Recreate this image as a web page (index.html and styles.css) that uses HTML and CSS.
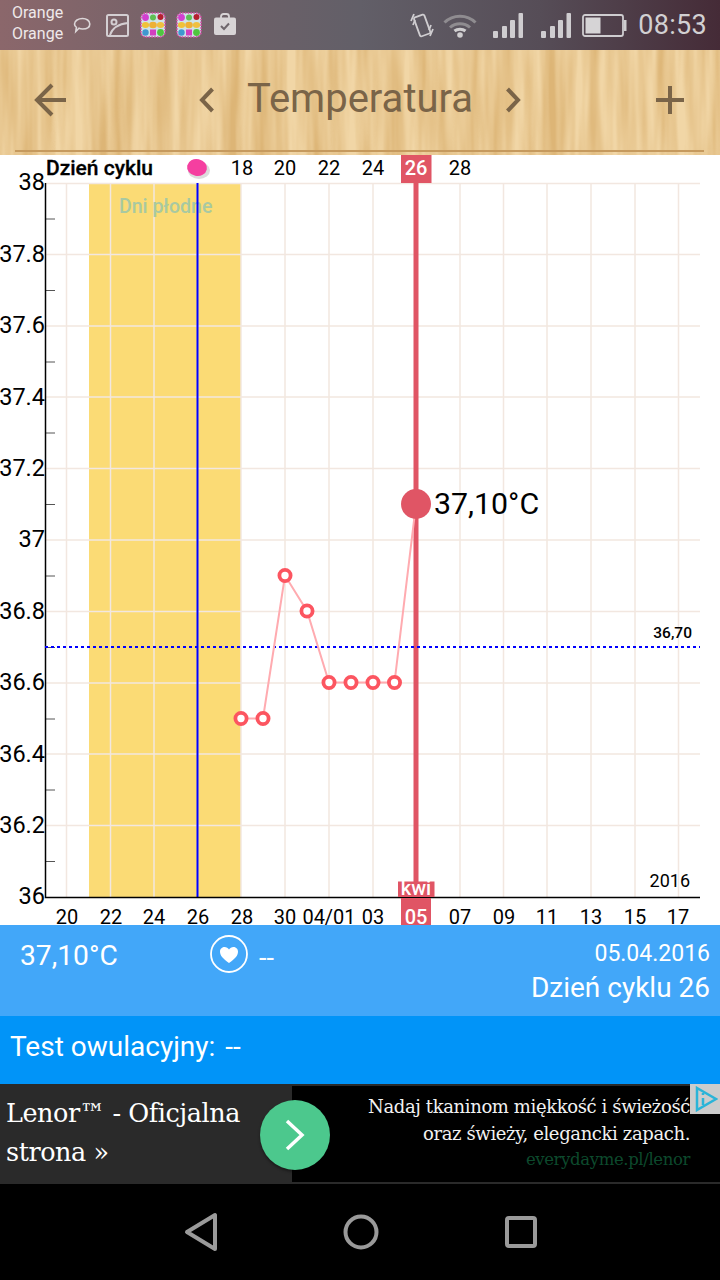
FILE: index.html
```html
<!DOCTYPE html>
<html lang="pl">
<head>
    <meta charset="UTF-8">
    <title>Temperatura</title>
    <meta name="viewport" content="width=device-width, initial-scale=1.0">
    <link rel="stylesheet" href="styles.css">
</head>
<body>
    <svg class="defs" width="0" height="0">
        <symbol id="candy" viewBox="0 0 26 26">
            <rect x="1" y="1" width="24" height="24" rx="5" fill="#cfe3e8" stroke="#d84fa8" stroke-width="1.6" stroke-dasharray="1.6 1.2"/>
            <circle cx="5.5" cy="5.5" r="3.4" fill="#d23fd0"/>
            <circle cx="13" cy="5.5" r="3" fill="#5fbf55"/>
            <circle cx="20.5" cy="5" r="3" fill="#b5202f"/>
            <ellipse cx="5.5" cy="13" rx="3.6" ry="3" fill="#f0c23a"/>
            <ellipse cx="13" cy="13" rx="3.8" ry="3.2" fill="#eeb035"/>
            <ellipse cx="20.5" cy="13" rx="3.6" ry="3" fill="#efc040"/>
            <circle cx="5.5" cy="20.5" r="3.2" fill="#3f98d0"/>
            <rect x="10" y="17.5" width="6" height="6" fill="#d23fc0"/>
            <circle cx="20.5" cy="20.5" r="3.4" fill="#4fc63f"/>
        </symbol>
        <symbol id="signal" viewBox="0 0 30 25">
            <rect x="0" y="18" width="5" height="7" rx="1"/>
            <rect x="9" y="13" width="5" height="12" rx="1"/>
            <rect x="17" y="7" width="5" height="18" rx="1"/>
            <rect x="25.500" y="0" width="4.500" height="25" rx="1"/>
        </symbol>
        <filter id="grain" x="0" y="0" width="100%" height="100%">
            <feTurbulence type="fractalNoise" baseFrequency="0.07 0.005" numOctaves="3" seed="7"/>
            <feColorMatrix values="0 0 0 0 0.72  0 0 0 0 0.46  0 0 0 0 0.18  2 0 0 0 -0.620"/>
        </filter>
    </svg>

    <div class="status-bar">
        <div class="carrier">Orange<br>Orange</div>
        <svg class="icon-bubble" width="18" height="17" viewBox="0 0 18 17">
            <path d="M9.500 1.500C13.500 1.500 16.800 3.700 16.800 7C16.800 10.300 13.500 12 9.500 12C8.300 12 7 11.800 6 11.300L2.800 14.500L3.400 10.300C2 9.300 1.500 8 1.500 7C1.500 3.700 5.500 1.500 9.500 1.500Z" fill="none" stroke="#dcd6d8" stroke-width="1.600"/>
        </svg>
        <svg class="icon-picture" width="23" height="23" viewBox="0 0 23 23" fill="none" stroke="#d4cfd2" stroke-width="2">
            <rect x="1" y="1" width="21" height="21" rx="1.500"/>
            <circle cx="8" cy="8" r="2.500"/>
            <path d="M4 21C6 15 12 10 22 9"/>
        </svg>
        <svg class="icon-candy" width="26" height="26"><use href="#candy"/></svg>
        <svg class="icon-candy second" width="26" height="26"><use href="#candy"/></svg>
        <svg class="icon-bag" width="22" height="22" viewBox="0 0 22 22">
            <path d="M7 5V3.500C7 2 8 1 9.500 1H12.500C14 1 15 2 15 3.500V5" fill="none" stroke="#d8d4d6" stroke-width="1.800"/>
            <rect x="0" y="4.500" width="22" height="17.500" rx="2" fill="#d8d4d6"/>
            <path d="M7 13L10 16L15 10.500" fill="none" stroke="#6f666c" stroke-width="2"/>
        </svg>
        <div class="status-right">
            <svg class="icon-vibrate" width="24" height="26" viewBox="0 0 24 26" fill="none" stroke="#cfcdd0" stroke-width="1.800">
                <rect x="6.500" y="3.500" width="11" height="20" rx="1.500" transform="rotate(-20 12 13)"/>
                <path d="M1 9L4 2M3 13L5 8M23 17L20 24M21 13L19 18"/>
            </svg>
            <svg class="icon-wifi" width="34" height="25" viewBox="0 0 34 25" fill="none">
                <path d="M1.500 9.500C10 1 24 1 32.500 9.500" stroke="#8f8c90" stroke-width="3"/>
                <path d="M7 14.500C12.500 9.500 21.500 9.500 27 14.500" stroke="#8f8c90" stroke-width="3"/>
                <path d="M11.500 18C14.500 15.500 19.500 15.500 22.500 18" stroke="#d0ced0" stroke-width="3"/>
                <circle cx="17" cy="22" r="2.800" fill="#d0ced0"/>
            </svg>
            <svg class="icon-signal" width="30" height="25" fill="#cfcdd0"><use href="#signal"/></svg>
            <svg class="icon-signal second" width="30" height="25" fill="#cfcdd0"><use href="#signal"/></svg>
            <svg class="icon-battery" width="45" height="23" viewBox="0 0 45 23">
                <rect x="1" y="1" width="40" height="21" rx="2" fill="none" stroke="#cfcdd0" stroke-width="1.800"/>
                <rect x="3.500" y="3.500" width="15" height="16" fill="#d6d4d6"/>
                <rect x="42" y="6" width="2.500" height="11" fill="#cfcdd0"/>
            </svg>
            <span class="clock">08:53</span>
        </div>
    </div>

    <header class="app-header">
        <svg class="wood" width="720" height="105"><rect width="720" height="105" filter="url(#grain)"/></svg>
        <svg class="icon-back" width="32" height="34" viewBox="0 0 32 34" fill="none" stroke="#7a6448" stroke-width="4">
            <path d="M32 17H3M18 2L3 17L18 32"/>
        </svg>
        <div class="title-group">
            <svg width="15" height="26" viewBox="0 0 15 26" fill="none" stroke="#7a6448" stroke-width="4"><path d="M13.500 2L3 13L13.500 24"/></svg>
            <h1>Temperatura</h1>
            <svg width="15" height="26" viewBox="0 0 15 26" fill="none" stroke="#7a6448" stroke-width="4"><path d="M1.500 2L12 13L1.500 24"/></svg>
        </div>
        <svg class="icon-plus" width="28" height="28" viewBox="0 0 28 28" fill="none" stroke="#7a6448" stroke-width="4">
            <path d="M0 14H28M14 0V28"/>
        </svg>
    </header>

    <svg class="chart" width="720" height="770" viewBox="0 155 720 770">
        <rect class="fertile" x="89" y="183" width="152" height="714"/>
        <path class="grid" d="M66.500 183V897M110.500 183V897M154 183V897M197.500 183V897M241 183V897M285 183V897M329 183V897M373 183V897M416 183V897M460 183V897M503.500 183V897M547 183V897M591 183V897M635 183V897M678.500 183V897"/>
        <path class="grid" d="M45 183.500H700M45 254.500H700M45 326H700M45 397H700M45 468.500H700M45 540H700M45 611.500H700M45 683H700M45 754H700M45 825.500H700"/>
        <path class="ticks" d="M46 219H55M46 290.500H55M46 362H55M46 433H55M46 504.500H55M46 576H55M46 647.500H55M46 719H55M46 790H55M46 861.500H55"/>
        <text class="fertile-label" x="119" y="213">Dni płodne</text>
        <path class="ovulation" d="M197.500 183V897"/>
        <path class="axis" d="M45.500 183V897.400H700"/>

        <g class="y-labels">
            <text x="45" y="190">38</text>
            <text x="45" y="262">37.8</text>
            <text x="45" y="333">37.6</text>
            <text x="45" y="405">37.4</text>
            <text x="45" y="476">37.2</text>
            <text x="45" y="547">37</text>
            <text x="45" y="619">36.8</text>
            <text x="45" y="690">36.6</text>
            <text x="45" y="762">36.4</text>
            <text x="45" y="833">36.2</text>
            <text x="45" y="904">36</text>
        </g>

        <text class="cycle-title" x="46" y="175">Dzień cyklu</text>
        <ellipse cx="199" cy="170.500" rx="11" ry="8.500" fill="#dcdcdc"/>
        <ellipse class="pink-dot" cx="197" cy="167.500" rx="10" ry="8.500" transform="rotate(12 197 167.500)"/>
        <g class="x-labels">
            <text x="242" y="175">18</text>
            <text x="285" y="175">20</text>
            <text x="329" y="175">22</text>
            <text x="373" y="175">24</text>
            <text x="460" y="175">28</text>
            <text x="67" y="924">20</text>
            <text x="111" y="924">22</text>
            <text x="154" y="924">24</text>
            <text x="198" y="924">26</text>
            <text x="242" y="924">28</text>
            <text x="285" y="924">30</text>
            <text x="329" y="924">04/01</text>
            <text x="373" y="924">03</text>
            <text x="460" y="924">07</text>
            <text x="504" y="924">09</text>
            <text x="547" y="924">11</text>
            <text x="591" y="924">13</text>
            <text x="635" y="924">15</text>
            <text x="678" y="924">17</text>
        </g>

        <path class="today-line" d="M416 183V897"/>
        <rect class="today" x="401" y="155" width="30.500" height="28"/>
        <rect class="today" x="398" y="881.500" width="36.500" height="15.500"/>
        <rect class="today" x="401" y="898" width="30" height="27"/>
        <text class="today-label" x="416" y="175">26</text>
        <text class="today-month" x="416" y="895">kwi</text>
        <text class="today-label" x="416" y="924">05</text>

        <path class="cover-line" d="M45 647H700"/>
        <text class="cover-value" x="692" y="638">36,70</text>
        <text class="year" x="690" y="887">2016</text>

        <polyline class="temp-line" points="241,718.500 263,718.500 285,575.500 307,611 329,682.500 351,682.500 373,682.500 394.500,682.500 416,504"/>
        <g class="temp-points">
            <circle cx="241" cy="718.500" r="5.600"/>
            <circle cx="263" cy="718.500" r="5.600"/>
            <circle cx="285" cy="575.500" r="5.600"/>
            <circle cx="307" cy="611" r="5.600"/>
            <circle cx="329" cy="682.500" r="5.600"/>
            <circle cx="351" cy="682.500" r="5.600"/>
            <circle cx="373" cy="682.500" r="5.600"/>
            <circle cx="394.500" cy="682.500" r="5.600"/>
        </g>
        <circle class="today" cx="416" cy="504" r="15"/>
        <text class="temp-value" x="434" y="514">37,10°C</text>
    </svg>

    <section class="info">
        <div class="info-temp">37,10°C</div>
        <div class="info-heart">
            <svg width="38" height="38" viewBox="0 0 38 38">
                <circle cx="19" cy="19" r="18" fill="none" stroke="#fff" stroke-width="1.800"/>
                <path d="M19 28C13 23.500 10 21 10 16.500C10 13.500 12.500 12 14.500 12C16.500 12 18 13 19 14.500C20 13 21.500 12 23.500 12C25.500 12 28 13.500 28 16.500C28 21 25 23.500 19 28Z" fill="#fff"/>
            </svg>
            <span>--</span>
        </div>
        <div class="info-date">
            <div class="date">05.04.2016</div>
            <div class="cycle-day">Dzień cyklu 26</div>
        </div>
    </section>

    <section class="ovulation-test">Test owulacyjny: <span>--</span></section>

    <section class="ad">
        <div class="ad-title">Lenor™ - Oficjalna strona »</div>
        <div class="ad-body">
            <p>Nadaj tkaninom miękkość i świeżość</p>
            <p>oraz świeży, elegancki zapach.</p>
            <p class="ad-url">everydayme.pl/lenor</p>
        </div>
        <div class="ad-go">
            <svg width="20" height="32" viewBox="0 0 20 32" fill="none" stroke="#fff" stroke-width="3.500"><path d="M2 2L17 16L2 30"/></svg>
        </div>
        <div class="ad-choices">
            <svg width="24" height="26" viewBox="0 0 24 26" fill="none" stroke="#2ab4d8" stroke-width="2.500">
                <path d="M3 2L22 13L3 24Z"/>
                <path d="M9 12V19M9 7V9"/>
            </svg>
        </div>
    </section>

    <nav class="nav-bar">
        <svg width="34" height="40" viewBox="0 0 34 40" fill="none" stroke="#9a9a9a" stroke-width="4" stroke-linejoin="round"><path d="M31 3V37L3 20Z"/></svg>
        <svg width="36" height="36" viewBox="0 0 36 36" fill="none" stroke="#9a9a9a" stroke-width="4"><circle cx="18" cy="18" r="15.500"/></svg>
        <svg width="32" height="32" viewBox="0 0 32 32" fill="none" stroke="#9a9a9a" stroke-width="4"><rect x="2" y="2" width="28" height="28" rx="2"/></svg>
    </nav>
</body>
</html>
```
FILE: styles.css
```css
* {
    box-sizing: border-box;
}

body {
    margin: 0;
    width: 720px;
    height: 1280px;
    overflow: hidden;
    background: #fff;
    font-family: Roboto, sans-serif;
}

.defs {
    position: absolute;
}

/* status bar */
.status-bar {
    height: 50px;
    display: flex;
    align-items: center;
    padding-left: 12px;
    background: linear-gradient(90deg, #8b676b 0%, #6f6168 30%, #625f68 50%, #564d57 75%, #452b37 100%);
}

.carrier {
    width: 61px;
    color: #efe9ea;
    font-size: 16px;
    line-height: 21px;
    margin-top: -4px;
}

.icon-picture {
    margin-left: 15px;
}

.icon-candy {
    margin-left: 11px;
}

.icon-candy.second {
    margin-left: 10px;
}

.icon-bag {
    margin-left: 12px;
    margin-top: -3px;
}

.status-right {
    margin-left: auto;
    display: flex;
    align-items: center;
    padding-right: 13px;
}

.icon-wifi {
    margin-left: 9px;
}

.icon-signal {
    margin-left: 16px;
}

.icon-signal.second {
    margin-left: 18px;
}

.icon-battery {
    margin-left: 11px;
}

.clock {
    margin-left: 11px;
    color: #d2d0d2;
    font-size: 27px;
    letter-spacing: 0.3px;
}

/* wood header */
.app-header {
    position: relative;
    height: 105px;
    display: flex;
    align-items: center;
    justify-content: space-between;
    padding: 0 36px 5px 34px;
    background: #f1d6a6;
}

.wood {
    position: absolute;
    left: 0;
    top: 0;
}

.app-header > svg:not(.wood),
.title-group {
    position: relative;
}

.app-header::after {
    content: "";
    position: absolute;
    left: 15px;
    top: 100px;
    width: 689px;
    height: 2px;
    background: #c69a5e;
}

.title-group {
    display: flex;
    align-items: center;
    gap: 33px;
    margin-left: -2px;
}

.app-header h1 {
    margin: -4px 0 0;
    color: #7a6448;
    font-size: 40px;
    font-weight: 400;
}

/* chart */
.chart {
    display: block;
    overflow: visible;
}

.fertile {
    fill: #fbdb75;
}

.grid {
    fill: none;
    stroke: #f2e7e0;
    stroke-width: 1.500;
}

.ticks {
    fill: none;
    stroke: #555;
    stroke-width: 1;
}

.axis {
    fill: none;
    stroke: #000;
    stroke-width: 1.500;
}

.ovulation {
    stroke: #0000ff;
    stroke-width: 2;
}

.fertile-label {
    fill: #a8c9a2;
    font-size: 19.500px;
    font-weight: 500;
}

.y-labels text {
    fill: #000;
    font-size: 23.500px;
    text-anchor: end;
}

.x-labels text {
    fill: #000;
    font-size: 20px;
    text-anchor: middle;
}

.cycle-title {
    fill: #000;
    stroke: #000;
    stroke-width: 0.300px;
    font-size: 21px;
    font-weight: 500;
}

.pink-dot {
    fill: #f53fa0;
}

.today-line {
    stroke: #e05565;
    stroke-width: 5;
}

.today {
    fill: #e05565;
}

.today-label {
    fill: #fff;
    font-size: 20px;
    font-weight: 500;
    text-anchor: middle;
}

.today-month {
    fill: #fff;
    font-size: 20px;
    font-weight: 500;
    text-anchor: middle;
}

.cover-line {
    stroke: #0000ff;
    stroke-width: 2;
    stroke-dasharray: 3 3;
}

.cover-value {
    fill: #000;
    font-size: 15.500px;
    font-weight: 500;
    text-anchor: end;
}

.year {
    fill: #000;
    font-size: 18px;
    text-anchor: end;
}

.temp-line {
    fill: none;
    stroke: #ffabb0;
    stroke-width: 2;
}

.temp-points circle {
    fill: #fff;
    stroke: #fc5560;
    stroke-width: 3.800;
}

.temp-value {
    fill: #000;
    font-size: 30.300px;
}

/* info panels */
.info {
    height: 91px;
    display: flex;
    background: #42a7f9;
    color: #fff;
}

.info-temp {
    width: 210px;
    padding: 14px 0 0 20px;
    font-size: 28.200px;
}

.info-heart {
    display: flex;
    align-items: flex-start;
    gap: 11px;
    padding-top: 10px;
    font-size: 27px;
}

.info-heart span {
    margin-top: 7px;
}

.info-date {
    margin-left: auto;
    padding: 15px 10px 0 0;
    text-align: right;
}

.date {
    font-size: 23px;
    line-height: 27px;
}

.cycle-day {
    font-size: 28px;
    line-height: 36px;
    margin-top: 3px;
}

.ovulation-test {
    height: 68px;
    padding: 14px 0 0 10px;
    background: #0194f8;
    color: #fff;
    font-size: 28px;
}

.ovulation-test span {
    margin-left: 3px;
}

/* ad */
.ad {
    position: relative;
    height: 100px;
    display: flex;
    background: #2a2a2a;
    font-family: "DejaVu Serif", serif;
}

.ad-title {
    width: 292px;
    padding: 10px 40px 0 6px;
    color: #fff;
    font-size: 25.500px;
    letter-spacing: -0.450px;
    line-height: 39px;
}

.ad-body {
    flex: 1;
    margin: 2px 0;
    padding: 7px 30px 0 0;
    background: #000;
    color: #f2f2f2;
    font-size: 18px;
    letter-spacing: -0.380px;
    text-align: right;
}

.ad-body p {
    margin: 0;
    line-height: 27px;
}

.ad-body .ad-url {
    color: #0d4a2d;
    font-size: 16.500px;
    line-height: 25px;
}

.ad-go {
    position: absolute;
    left: 260px;
    top: 16px;
    width: 70px;
    height: 70px;
    display: flex;
    align-items: center;
    justify-content: center;
    border-radius: 50%;
    background: #4cc88d;
    box-shadow: 0 2px 3px rgba(0, 0, 0, 0.4);
}

.ad-choices {
    position: absolute;
    right: 0;
    top: 0;
    width: 30px;
    height: 30px;
    padding: 2px 0 0 4px;
    background: #cccccc;
}

/* nav */
.nav-bar {
    height: 96px;
    display: flex;
    align-items: center;
    padding-left: 184px;
    background: #000;
}

.nav-bar svg:nth-child(2) {
    margin-left: 125px;
}

.nav-bar svg:nth-child(3) {
    margin-left: 126px;
}
```
